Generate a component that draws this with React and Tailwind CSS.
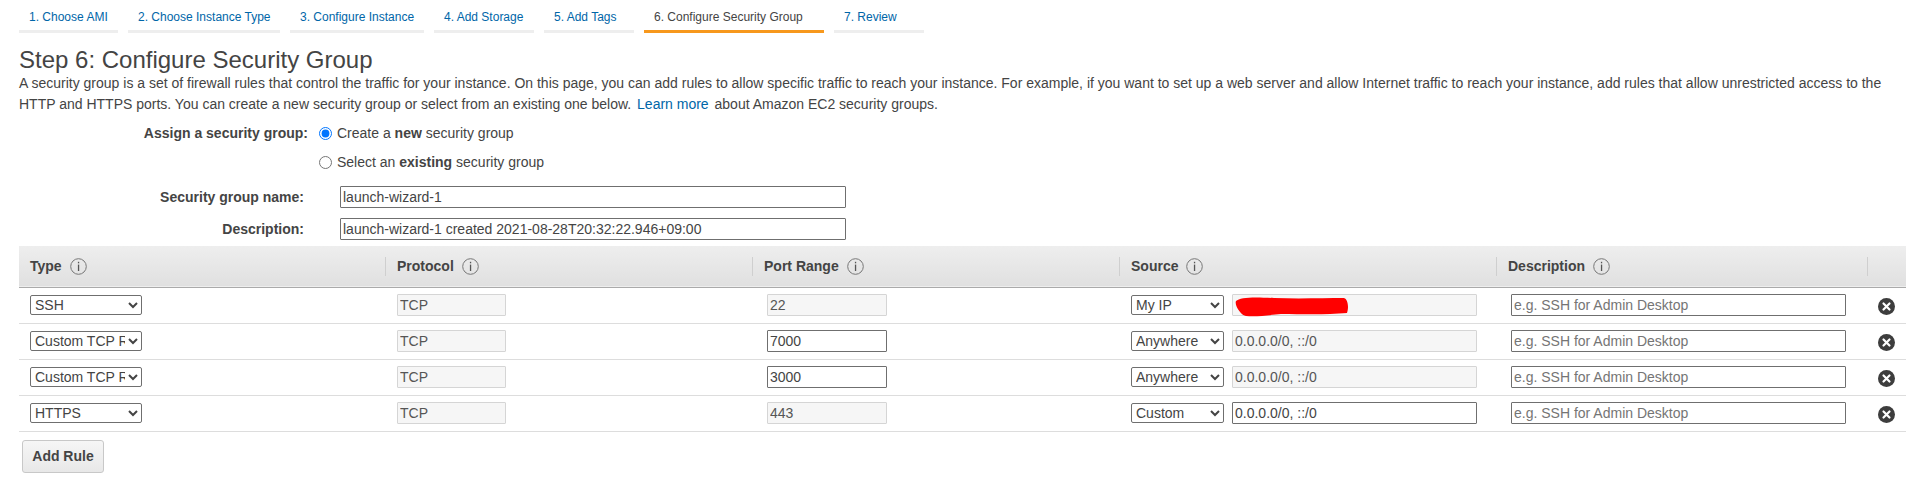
import { useState } from "react";

const tabs = [
  { label: "1. Choose AMI", width: "w-[99px]" },
  { label: "2. Choose Instance Type", width: "w-[152px]" },
  { label: "3. Configure Instance", width: "w-[134px]" },
  { label: "4. Add Storage", width: "w-[100px]" },
  { label: "5. Add Tags", width: "w-[90px]" },
  { label: "6. Configure Security Group", width: "w-[180px]", active: true },
  { label: "7. Review", width: "w-[90px]" },
];

const rules = [
  { type: "SSH", port: "22", portEditable: false, source: "My IP", cidr: "", cidrEditable: false, redacted: true },
  { type: "Custom TCP Rule", port: "7000", portEditable: true, source: "Anywhere", cidr: "0.0.0.0/0, ::/0", cidrEditable: false },
  { type: "Custom TCP Rule", port: "3000", portEditable: true, source: "Anywhere", cidr: "0.0.0.0/0, ::/0", cidrEditable: false },
  { type: "HTTPS", port: "443", portEditable: false, source: "Custom", cidr: "0.0.0.0/0, ::/0", cidrEditable: true },
];

const columns = [
  { label: "Type", width: "w-[366px]" },
  { label: "Protocol", width: "w-[367px]" },
  { label: "Port Range", width: "w-[367px]" },
  { label: "Source", width: "w-[377px]" },
  { label: "Description", width: "w-[371px]" },
];

const InfoIcon = () => (
  <svg width="17" height="17" viewBox="0 0 17 17" className="ml-[8px] shrink-0">
    <circle cx="8.5" cy="8.5" r="7.8" fill="none" stroke="#777" strokeWidth="1" />
    <rect x="7.9" y="3.8" width="1.3" height="1.5" fill="#555" />
    <rect x="7.9" y="6.6" width="1.3" height="6.4" fill="#555" />
  </svg>
);

const RemoveIcon = () => (
  <svg width="17" height="17" viewBox="0 0 17 17" className="block mt-[2px]">
    <circle cx="8.5" cy="8.5" r="8.5" fill="#3d3d3d" />
    <path d="M5.5 5.5l6 6M11.5 5.5l-6 6" stroke="#fff" strokeWidth="2.2" strokeLinecap="round" />
  </svg>
);

const fieldClass = (editable) =>
  editable
    ? "h-[22px] border border-[#6f6f6f] rounded-[1px] bg-white px-[2px] text-[14px] text-[#444]"
    : "h-[22px] border border-[#d5d5d5] rounded-[1px] bg-[#f6f6f6] px-[2px] text-[14px] text-[#555]";

const selectClass =
  "h-5 border border-[#6f6f6f] rounded-[2px] bg-white text-[14px] text-[#444]";

export default function App() {
  const [group, setGroup] = useState("new");

  return (
    <div className="min-h-[484px] bg-white pl-[19px] pr-[5px] text-[14px] text-[#444] font-['Liberation_Sans',Arial,sans-serif]">
      {/* Wizard tabs */}
      <div className="flex gap-[10px] h-[33px]">
        {tabs.map((tab) => (
          <div
            key={tab.label}
            className={`${tab.width} h-[33px] pl-[10px] text-left text-[12px] leading-[35px] border-b-[3px] ${
              tab.active
                ? "border-[#f7981d] text-[#444]"
                : "border-[#eeeeee] text-[#0066a8]"
            }`}
          >
            {tab.label}
          </div>
        ))}
      </div>

      <h1 className="mt-[16px] text-[24px] leading-[22px] text-[#444]">
        Step 6: Configure Security Group
      </h1>
      <p className="mt-[2px] text-[14px] leading-[21px]">
        A security group is a set of firewall rules that control the traffic for your instance. On this page, you can add rules to allow specific traffic to reach your instance. For example, if you want to set up a web server and allow Internet traffic to reach your instance, add rules that allow unrestricted access to the HTTP and HTTPS ports. You can create a new security group or select from an existing one below.{" "}
        <a className="text-[#0066a8] mx-[2px]">Learn more</a> about Amazon EC2 security groups.
      </p>

      {/* Assign form */}
      <div className="mt-[4px] grid grid-cols-[289px_1fr] items-center">
        <div className="font-bold text-right">Assign a security group:</div>
        <label className="flex items-center h-[29px] ml-[11px]">
          <input type="radio" name="group" checked={group === "new"} onChange={() => setGroup("new")} className="m-0 mr-[5px] w-[13px] h-[13px]" />
          <span>Create a <b>new</b> security group</span>
        </label>
        <div />
        <label className="flex items-center h-[29px] ml-[11px]">
          <input type="radio" name="group" checked={group === "existing"} onChange={() => setGroup("existing")} className="m-0 mr-[5px] w-[13px] h-[13px]" />
          <span>Select an <b>existing</b> security group</span>
        </label>
      </div>

      <div className="mt-[9px] grid grid-cols-[285px_506px] gap-y-[10px] items-center">
        <div className="font-bold text-right">Security group name:</div>
        <input defaultValue="launch-wizard-1" className="ml-[36px] w-[506px] h-[22px] border border-[#6f6f6f] rounded-[1px] px-[2px] text-[14px] text-[#444]" />
        <div className="font-bold text-right">Description:</div>
        <input defaultValue="launch-wizard-1 created 2021-08-28T20:32:22.946+09:00" className="ml-[36px] w-[506px] h-[22px] border border-[#6f6f6f] rounded-[1px] px-[2px] text-[14px] text-[#444]" />
      </div>

      {/* Rules table */}
      <table className="mt-[6px] w-[1887px] table-fixed border-collapse">
        <thead>
          <tr className="h-[41px] bg-gradient-to-b from-[#eeeeee] to-[#e0e0e0] border-b border-[#aaaaaa]">
            {columns.map((col, i) => (
              <th key={col.label} className={`${col.width} p-0 text-left font-bold`}>
                <div className={`flex items-center h-[19px] ${i === 0 ? "pl-[11px]" : "pl-[11px] border-l border-[#cfcfcf]"}`}>
                  {col.label}
                  <InfoIcon />
                </div>
              </th>
            ))}
            <th className="p-0">
              <div className="h-[19px] border-l border-[#cfcfcf]" />
            </th>
          </tr>
        </thead>
        <tbody>
          {rules.map((rule, i) => (
            <tr key={i} className="h-[36px] border-b border-[#dddddd]">
              <td className="p-0 pl-[11px]">
                <select defaultValue={rule.type} className={`${selectClass} w-[112px]`}>
                  <option>SSH</option>
                  <option>Custom TCP Rule</option>
                  <option>HTTPS</option>
                </select>
              </td>
              <td className="p-0 pl-[12px]">
                <input disabled value="TCP" readOnly className={`${fieldClass(false)} w-[109px]`} />
              </td>
              <td className="p-0 pl-[15px]">
                <input
                  disabled={!rule.portEditable}
                  defaultValue={rule.port}
                  className={`${fieldClass(rule.portEditable)} w-[120px]`}
                />
              </td>
              <td className="p-0 pl-[12px]">
                <div className="flex items-center gap-2 relative">
                  <select defaultValue={rule.source} className={`${selectClass} w-[93px]`}>
                    <option>Custom</option>
                    <option>Anywhere</option>
                    <option>My IP</option>
                  </select>
                  <input
                    disabled={!rule.cidrEditable}
                    defaultValue={rule.cidr}
                    className={`${fieldClass(rule.cidrEditable)} w-[245px]`}
                  />
                  {rule.redacted && (
                    <svg width="116" height="21" viewBox="0 0 116 21" className="absolute left-[103px] top-[2px]">
                      <path d="M2 5C6 1 20 1 40 2c25 1 50 0 70 0 4 1 5 10 3 15-22 2-46 1-66 1-12 1-24 3-35 2C8 20 0 10 2 5z" fill="#ff0000" />
                    </svg>
                  )}
                </div>
              </td>
              <td className="p-0 pl-[15px]">
                <input
                  placeholder="e.g. SSH for Admin Desktop"
                  className="h-[22px] w-[335px] border border-[#6f6f6f] rounded-[1px] bg-white px-[2px] text-[14px] text-[#444] placeholder:text-[#757575]"
                />
              </td>
              <td className="p-0 pl-[11px]">
                <RemoveIcon />
              </td>
            </tr>
          ))}
        </tbody>
      </table>

      <button className="mt-[8px] ml-[3px] block w-[82px] h-[33px] border border-[#c8c8c8] rounded-[3px] bg-gradient-to-b from-[#f6f6f6] to-[#e8e8e8] font-bold text-[14px] text-[#444]">
        Add Rule
      </button>
    </div>
  );
}
